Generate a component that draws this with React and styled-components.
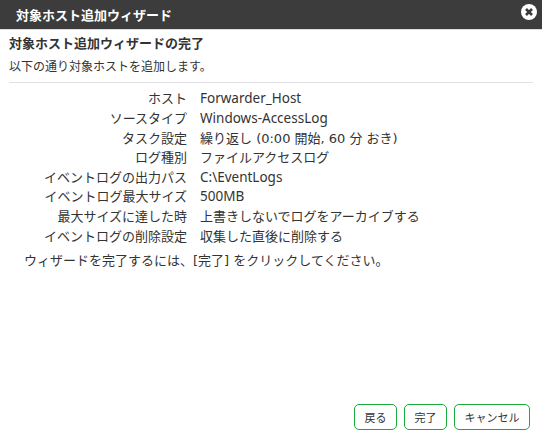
import React from "react";
import styled, { createGlobalStyle } from "styled-components";

const Global = createGlobalStyle`
  html, body {
    margin: 0;
    padding: 0;
    background: #fff;
  }
  body {
    font-family: "DejaVu Sans", "Noto Sans CJK JP", sans-serif;
    font-size: 13px;
    color: #333;
    font-kerning: normal;
  }
`;

const Dialog = styled.div`
  width: 542px;
  height: 435px;
  display: flex;
  flex-direction: column;
  overflow: hidden;
`;

const Header = styled.header`
  height: 29px;
  flex: none;
  background: #3c3c3c;
  border-bottom: 1px solid #ddd;
  display: flex;
  align-items: center;
  justify-content: space-between;
  padding: 0 5px 0 16px;
  color: #fff;
  font-weight: 700;
`;

const CloseButton = styled.span`
  display: flex;
  margin-top: -5px;
`;

const Body = styled.main`
  flex: 1;
  padding: 5px 9px 0;
`;

const Title = styled.h1`
  margin: 0;
  font-size: 13px;
  line-height: 18px;
  font-weight: 700;
`;

const Lead = styled.p`
  margin: 5px 0 0;
  font-size: 12px;
  line-height: 18px;
  padding-bottom: 6px;
  border-bottom: 1px solid #e0e0e6;
`;

const Summary = styled.dl`
  margin: 6.4px 0 0;
  display: grid;
  grid-template-columns: 178px 1fr;
  column-gap: 13px;
  grid-auto-rows: 19.6px;
  line-height: 19.6px;
`;

const Label = styled.dt`
  text-align: right;
`;

const Value = styled.dd`
  margin: 0;
  ${(p) => p.$latin && `font-family: "Noto Sans", sans-serif; font-size: 13.5px;`}
`;

const Note = styled.p`
  margin: 5.6px 0 0 15px;
  line-height: 18px;
`;

const Footer = styled.footer`
  flex: none;
  display: flex;
  justify-content: flex-end;
  gap: 7px;
  padding: 0 12px 5px 0;
`;

const Button = styled.button`
  height: 26px;
  width: ${(p) => p.$width}px;
  padding: 0;
  border: 1px solid #1aaa3c;
  border-radius: 5px;
  background: #fff;
  color: #333;
  font-family: inherit;
  font-size: 11px;
`;

const rows = [
  ["ホスト", "Forwarder_Host", true],
  ["ソースタイプ", "Windows-AccessLog", true],
  ["タスク設定", "繰り返し (0:00 開始, 60 分 おき)"],
  ["ログ種別", "ファイルアクセスログ"],
  ["イベントログの出力パス", "C:\\EventLogs", true],
  ["イベントログ最大サイズ", "500MB", true],
  ["最大サイズに達した時", "上書きしないでログをアーカイブする"],
  ["イベントログの削除設定", "収集した直後に削除する"],
];

export default function App() {
  return (
    <Dialog>
      <Global />
      <Header>
        対象ホスト追加ウィザード
        <CloseButton>
          <svg width="16" height="16" viewBox="0 0 16 16">
            <circle cx="8" cy="8" r="8" fill="#fff" />
            <path d="M5 5l6 6M11 5l-6 6" stroke="#3c3c3c" strokeWidth="2.6" />
          </svg>
        </CloseButton>
      </Header>
      <Body>
        <Title>対象ホスト追加ウィザードの完了</Title>
        <Lead>以下の通り対象ホストを追加します。</Lead>
        <Summary>
          {rows.map(([label, value, latin]) => (
            <React.Fragment key={label}>
              <Label>{label}</Label>
              <Value $latin={latin}>{value}</Value>
            </React.Fragment>
          ))}
        </Summary>
        <Note>ウィザードを完了するには、[完了] をクリックしてください。</Note>
      </Body>
      <Footer>
        <Button $width={43}>戻る</Button>
        <Button $width={43}>完了</Button>
        <Button $width={76}>キャンセル</Button>
      </Footer>
    </Dialog>
  );
}
